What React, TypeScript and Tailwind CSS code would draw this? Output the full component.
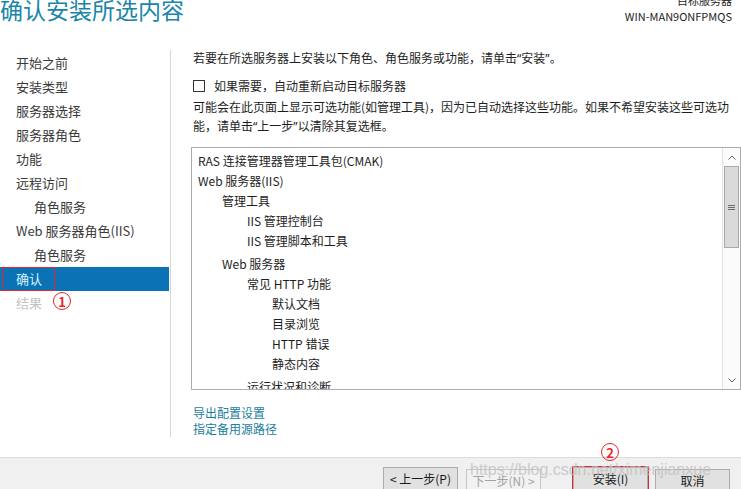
import React from 'react';

type NavItem = { label: string; sub?: boolean; active?: boolean; disabled?: boolean };

const navItems: NavItem[] = [
  { label: '开始之前' },
  { label: '安装类型' },
  { label: '服务器选择' },
  { label: '服务器角色' },
  { label: '功能' },
  { label: '远程访问' },
  { label: '角色服务', sub: true },
  { label: 'Web 服务器角色(IIS)' },
  { label: '角色服务', sub: true },
  { label: '确认', active: true },
  { label: '结果', disabled: true },
];

type Feature = { label: string; level: number; gap?: boolean };

const features: Feature[] = [
  { label: 'RAS 连接管理器管理工具包(CMAK)', level: 0 },
  { label: 'Web 服务器(IIS)', level: 0 },
  { label: '管理工具', level: 1 },
  { label: 'IIS 管理控制台', level: 2 },
  { label: 'IIS 管理脚本和工具', level: 2 },
  { label: 'Web 服务器', level: 1, gap: true },
  { label: '常见 HTTP 功能', level: 2 },
  { label: '默认文档', level: 3 },
  { label: '目录浏览', level: 3 },
  { label: 'HTTP 错误', level: 3 },
  { label: '静态内容', level: 3 },
  { label: '运行状况和诊断', level: 2, gap: true },
];

const indent = ['pl-0', 'pl-[24px]', 'pl-[49px]', 'pl-[74px]'];

// narrow western quotes, as the wizard renders them
const Q = ({ children }: { children: React.ReactNode }) => (
  <span className="font-['Noto_Sans'] leading-[0px]">{children}</span>
);

const Marker = ({ n, className }: { n: number; className: string }) => (
  <span
    className={`absolute w-[18px] h-[18px] rounded-full border-[1.5px] border-[#e8242c] text-[#e8242c] text-[13px] leading-[15px] font-bold flex items-center justify-center ${className}`}
  >
    {n}
  </span>
);

const WizardButton = ({ children, disabled }: { children: React.ReactNode; disabled?: boolean }) => (
  <button
    className={`w-[75px] h-[24px] border text-[12px] leading-[22px] ${
      disabled ? 'border-[#c6c6c6] bg-[#f2f2f2] text-[#a2a2a2]' : 'border-[#adadad] bg-[#e1e1e1] text-[#1a1a1a]'
    }`}
  >
    {children}
  </button>
);

const App: React.FC = () => {
  return (
    <div
      className="w-[741px] h-[489px] overflow-hidden bg-white flex flex-col relative text-[#1e1e1e]"
      style={{ fontFamily: '"Noto Sans CJK SC", "Noto Sans", sans-serif' }}
    >
      <header className="h-[50px] flex justify-between items-start shrink-0">
        <h1 className="text-[23px] leading-[23px] -mt-[2px] text-[#1a85a8] font-normal">确认安装所选内容</h1>
        <div className="text-right pr-[9px] text-[11px] text-[#1e1e1e]">
          <div className="leading-[11px] -mt-[5px]">目标服务器</div>
          <div className="leading-[14px] mt-[3px]">WIN-MAN9ONFPMQS</div>
        </div>
      </header>

      <div className="flex h-[407px] shrink-0">
        <nav className="w-[171px] h-[387px] border-r border-[#d6d6d6] pt-[1px] text-[13px]">
          {navItems.map((item, i) => (
            <div
              key={i}
              className={`relative h-[24px] leading-[24px] ${item.sub ? 'pl-[34px]' : 'pl-[16px]'} ${
                item.active ? 'bg-[#0b72b5] text-[#d6f2ff] mr-[1px]' : item.disabled ? 'text-[#c4c4c4]' : 'text-[#3a3a3a]'
              }`}
            >
              {item.label}
              {item.active && (
                <span className="absolute left-[2px] top-0 w-[53px] h-[24px] border border-[#e5262e]" />
              )}
              {item.disabled && <Marker n={1} className="left-[53px] top-[1px]" />}
            </div>
          ))}
        </nav>

        <section className="flex-1 flex flex-col pl-[22px] text-[12px]">
          <p className="h-[16px] leading-[16px]">
            若要在所选服务器上安装以下角色、角色服务或功能，请单击<Q>“</Q>安装<Q>”</Q>。
          </p>
          <label className="flex items-center mt-[14px] h-[12px]">
            <span className="w-[12px] h-[12px] border border-[#333] bg-white shrink-0" />
            <span className="ml-[9px] leading-[12px]">如果需要，自动重新启动目标服务器</span>
          </label>
          <p className="mt-[5px] h-[38px] leading-[19px]">
            可能会在此页面上显示可选功能(如管理工具)，因为已自动选择这些功能。如果不希望安装这些可选功
            <br />
            能，请单击<Q>“</Q>上一步<Q>”</Q>以清除其复选框。
          </p>

          <div className="mt-[12px] -ml-[2px] w-[550px] h-[243px] border border-[#acacac] flex overflow-hidden">
            <div className="flex-1 pl-[6px] pt-[3px] leading-[20px]">
              {features.map((f, i) => (
                <div key={i} className={`${indent[f.level]} ${f.gap ? 'mt-[3px]' : ''} whitespace-nowrap`}>
                  {f.label}
                </div>
              ))}
            </div>
            <div className="w-[18px] border-l border-[#e2e2e2] bg-[#fbfbfb] flex flex-col">
              <div className="h-[18px] flex items-center justify-center">
                <svg width="8" height="5" viewBox="0 0 8 5">
                  <path d="M0.5 4.5 L4 1 L7.5 4.5" fill="none" stroke="#606060" strokeWidth="1" />
                </svg>
              </div>
              <div className="h-[82px] mx-[1px] bg-[#dadada] border border-[#a9a9a9] flex items-center justify-center">
                <svg width="7" height="7" viewBox="0 0 7 7">
                  <path d="M0 1.5 H7 M0 3.5 H7 M0 5.5 H7" stroke="#6a6a6a" strokeWidth="1" />
                </svg>
              </div>
              <div className="flex-1" />
              <div className="h-[18px] flex items-center justify-center">
                <svg width="8" height="5" viewBox="0 0 8 5">
                  <path d="M0.5 0.5 L4 4 L7.5 0.5" fill="none" stroke="#606060" strokeWidth="1" />
                </svg>
              </div>
            </div>
          </div>

          <div className="mt-[15px] leading-[16px] text-[#1b7ea0]">
            <div>导出配置设置</div>
            <div>指定备用源路径</div>
          </div>
        </section>
      </div>

      <footer className="flex-1 bg-[#f0f0f0] border-t border-[#dcdcdc] flex justify-end items-start pt-[9px] pr-[11px]">
        <WizardButton>&lt; 上一步(P)</WizardButton>
        <div className="ml-[8px]">
          <WizardButton disabled>下一步(N) &gt;</WizardButton>
        </div>
        <div className="relative ml-[31px] -mt-[1px] border border-[#e5262e] w-[77px] h-[26px] flex items-center justify-center">
          <WizardButton>安装(I)</WizardButton>
          <Marker n={2} className="left-[28px] -top-[24px]" />
        </div>
        <div className="ml-[6px]">
          <WizardButton>取消</WizardButton>
        </div>
      </footer>

      <span
        className="absolute left-[470px] top-[460px] text-[16px] leading-[20px] text-[#c2c2c2] opacity-80 pointer-events-none"
        style={{ fontFamily: '"Liberation Sans", sans-serif' }}
      >
        https://blog.csdn.net/ximenjianxue
      </span>
    </div>
  );
};

export default App;
